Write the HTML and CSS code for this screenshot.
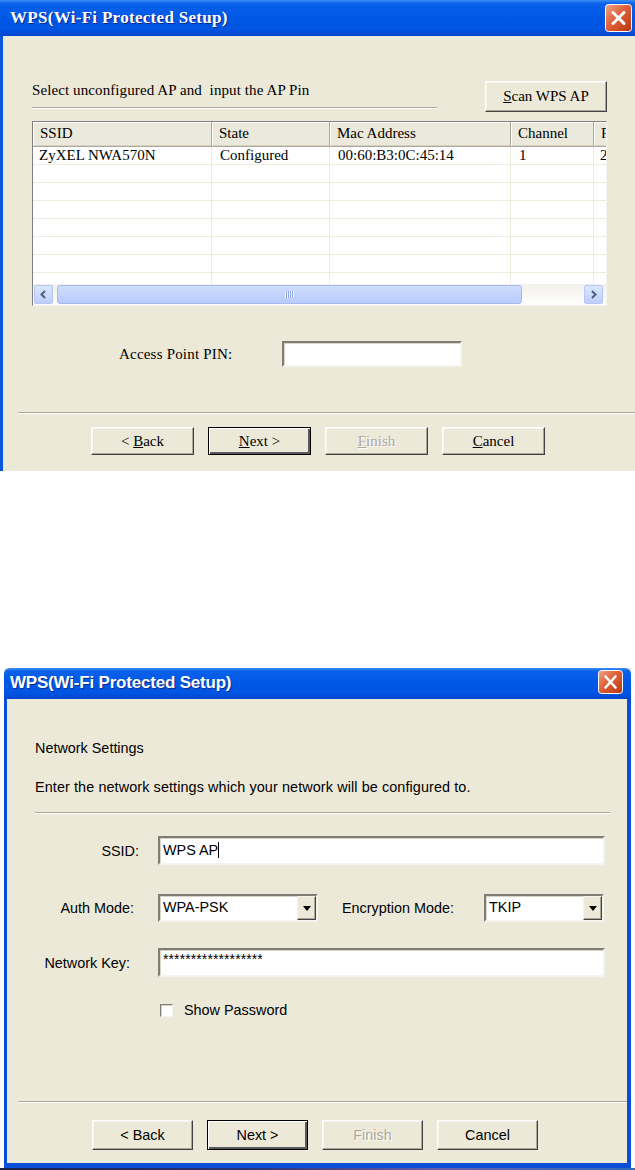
FILE: index.html
```html
<!DOCTYPE html>
<html lang="en">
<head>
  <meta charset="UTF-8" />
  <title>WPS(Wi-Fi Protected Setup)</title>
  <link rel="stylesheet" href="styles.css">
</head>
<body>

<!-- first wizard step: pick an AP -->
<div class="window classic">
  <div class="titlebar">
    <span class="title">WPS(Wi-Fi Protected Setup)</span>
    <span class="close">
      <svg width="27" height="28" viewBox="0 0 27 28">
        <defs>
          <linearGradient id="closeA" x1="0" y1="0" x2="1" y2="1">
            <stop offset="0" stop-color="#f0a58a"/>
            <stop offset="0.45" stop-color="#e0603a"/>
            <stop offset="1" stop-color="#b8360e"/>
          </linearGradient>
        </defs>
        <rect x="0.5" y="0.5" width="26" height="27" rx="3" fill="url(#closeA)" stroke="#fff"/>
        <path d="M8 8.5 L19 19.5 M19 8.5 L8 19.5" stroke="#fff" stroke-width="3" stroke-linecap="round"/>
      </svg>
    </span>
  </div>
  <div class="client">
    <div class="intro-row">
      <div class="intro">Select unconfigured AP and&nbsp; input the AP Pin</div>
      <div class="btn scan"><span><u>S</u>can WPS AP</span></div>
    </div>

    <div class="listview">
      <div class="lv-head">
        <div class="lv-col">SSID</div>
        <div class="lv-col">State</div>
        <div class="lv-col">Mac Address</div>
        <div class="lv-col">Channel</div>
        <div class="lv-col">F</div>
      </div>
      <div class="lv-body">
        <div class="lv-row">
          <div class="lv-cell">ZyXEL NWA570N</div>
          <div class="lv-cell">Configured</div>
          <div class="lv-cell">00:60:B3:0C:45:14</div>
          <div class="lv-cell">1</div>
          <div class="lv-cell">2</div>
        </div>
        <div class="lv-row"><div class="lv-cell"></div><div class="lv-cell"></div><div class="lv-cell"></div><div class="lv-cell"></div><div class="lv-cell"></div></div>
        <div class="lv-row"><div class="lv-cell"></div><div class="lv-cell"></div><div class="lv-cell"></div><div class="lv-cell"></div><div class="lv-cell"></div></div>
        <div class="lv-row"><div class="lv-cell"></div><div class="lv-cell"></div><div class="lv-cell"></div><div class="lv-cell"></div><div class="lv-cell"></div></div>
        <div class="lv-row"><div class="lv-cell"></div><div class="lv-cell"></div><div class="lv-cell"></div><div class="lv-cell"></div><div class="lv-cell"></div></div>
        <div class="lv-row"><div class="lv-cell"></div><div class="lv-cell"></div><div class="lv-cell"></div><div class="lv-cell"></div><div class="lv-cell"></div></div>
        <div class="lv-row"><div class="lv-cell"></div><div class="lv-cell"></div><div class="lv-cell"></div><div class="lv-cell"></div><div class="lv-cell"></div></div>
        <div class="lv-row"><div class="lv-cell"></div><div class="lv-cell"></div><div class="lv-cell"></div><div class="lv-cell"></div><div class="lv-cell"></div></div>
      </div>
      <div class="hscroll">
        <div class="sb-btn">
          <svg width="9" height="9" viewBox="0 0 9 9"><path d="M6 1 L2.5 4.5 L6 8" fill="none" stroke="#4d6185" stroke-width="2"/></svg>
        </div>
        <div class="sb-track">
          <div class="sb-thumb"><span class="grip"></span></div>
        </div>
        <div class="sb-btn">
          <svg width="9" height="9" viewBox="0 0 9 9"><path d="M3 1 L6.5 4.5 L3 8" fill="none" stroke="#4d6185" stroke-width="2"/></svg>
        </div>
      </div>
    </div>

    <div class="pin-row">
      <span class="pin-label">Access Point PIN:</span>
      <div class="field pin-field"></div>
    </div>

    <div class="sep wide"></div>

    <div class="wizard-buttons">
      <div class="btn"><span>&lt; <u>B</u>ack</span></div>
      <div class="btn default"><span><u>N</u>ext &gt;</span></div>
      <div class="btn disabled"><span><u>F</u>inish</span></div>
      <div class="btn"><span><u>C</u>ancel</span></div>
    </div>
  </div>
</div>

<!-- second step: network settings -->
<div class="window xp">
  <div class="titlebar">
    <span class="title">WPS(Wi-Fi Protected Setup)</span>
    <span class="close">
      <svg width="25" height="24" viewBox="0 0 25 24">
        <defs>
          <linearGradient id="closeB" x1="0" y1="0" x2="1" y2="1">
            <stop offset="0" stop-color="#f0a58a"/>
            <stop offset="0.45" stop-color="#e0603a"/>
            <stop offset="1" stop-color="#b8360e"/>
          </linearGradient>
        </defs>
        <rect x="0.5" y="0.5" width="24" height="23" rx="3" fill="url(#closeB)" stroke="#fff"/>
        <path d="M7.5 6.5 L17.5 17.5 M17.5 6.5 L7.5 17.5" stroke="#fff" stroke-width="2.6" stroke-linecap="round"/>
      </svg>
    </span>
  </div>
  <div class="client">
    <p class="heading">Network Settings</p>
    <p class="desc">Enter the network settings which your network will be configured to.</p>
    <div class="sep inner"></div>

    <div class="form-row ssid-row">
      <span class="lbl">SSID:</span>
      <div class="field text-field">WPS AP<span class="caret"></span></div>
    </div>

    <div class="form-row auth-row">
      <span class="lbl lbl-auth">Auth Mode:</span>
      <div class="field combo auth-combo">
        <span class="combo-text">WPA-PSK</span>
        <span class="combo-btn"><span class="arrow"></span></span>
      </div>
      <span class="enc-label">Encryption Mode:</span>
      <div class="field combo enc-combo">
        <span class="combo-text">TKIP</span>
        <span class="combo-btn"><span class="arrow"></span></span>
      </div>
    </div>

    <div class="form-row key-row">
      <span class="lbl lbl-key">Network Key:</span>
      <div class="field text-field key-field">******************</div>
    </div>

    <div class="check-row">
      <span class="checkbox"></span>
      <span>Show Password</span>
    </div>

    <div class="sep full"></div>

    <div class="wizard-buttons">
      <div class="btn"><span>&lt; Back</span></div>
      <div class="btn default"><span>Next &gt;</span></div>
      <div class="btn disabled"><span>Finish</span></div>
      <div class="btn"><span>Cancel</span></div>
    </div>
  </div>
</div>

<div class="taskbar"></div>

</body>
</html>
```

FILE: styles.css
```css
body {
  margin: 0;
  background: #fff;
  width: 635px;
  overflow: hidden;
}

.window {
  background: #ece9d8;
  color: #000;
}

.titlebar {
  display: flex;
  justify-content: space-between;
  align-items: flex-start;
  background: linear-gradient(to bottom, #3c8df6 0%, #0a62ea 10%, #0058e6 45%, #0055e2 80%, #0046cf 100%);
  color: #fff;
  box-sizing: border-box;
}

.title {
  font-weight: bold;
  white-space: nowrap;
  text-shadow: 1px 1px #0a2a8c;
}

.close svg {
  display: block;
}

/* classic look, serif bitmap style font */
.classic {
  width: 635px;
  font-family: "Liberation Serif", serif;
  font-size: 15px;
}

.classic .titlebar {
  height: 36px;
  padding: 4px 3px 0 10px;
}

.classic .title {
  font-size: 17px;
  line-height: 28px;
  letter-spacing: 0.3px;
}

.classic .client {
  border-left: 3px solid #0a57e0;
  padding: 45px 0 16px 0;
}

.intro-row {
  display: flex;
  align-items: flex-start;
  padding-left: 29px;
}

.intro {
  width: 405px;
  height: 26px;
  line-height: 18px;
  border-bottom: 1px solid #aca899;
  box-shadow: 0 1px 0 #fff;
  white-space: nowrap;
  letter-spacing: 0.1px;
}

.btn {
  box-sizing: border-box;
  width: 103px;
  height: 28px;
  display: flex;
  align-items: center;
  justify-content: center;
  background: #ece9d8;
  border: 1px solid;
  border-color: #fff #404040 #404040 #fff;
  box-shadow: inset -1px -1px 0 #aca899, inset 1px 1px 0 #f7f6f1;
  white-space: nowrap;
}

.btn.scan {
  width: 122px;
  height: 31px;
  margin-left: 48px;
}

.btn.default {
  border: 1px solid #000;
  box-shadow: inset 1px 1px 0 #fff, inset -2px -2px 0 #5a5a5a;
}

.btn.disabled {
  color: #aca899;
  text-shadow: 1px 1px 0 #fff;
}

/* list view */
.listview {
  margin: 9px 0 0 29px;
  width: 575px;
  height: 185px;
  box-sizing: border-box;
  border: 1px solid #7f7f7f;
  border-right-color: #f4f3ee;
  border-bottom-color: #f4f3ee;
  background: #fff;
  overflow: hidden;
}

.lv-head,
.lv-row {
  display: grid;
  grid-template-columns: 179px 118px 181px 83px 12px;
}

.lv-head {
  height: 25px;
}

.lv-col {
  box-sizing: border-box;
  padding-left: 7px;
  line-height: 23px;
  background: #ebe9db;
  border-right: 1px solid #aca899;
  border-bottom: 1px solid #aca899;
  box-shadow: inset 1px 1px 0 #fff, inset 0 -1px 0 #d6d2c2;
  white-space: nowrap;
  overflow: hidden;
}

.lv-col:last-child {
  border-right: 0;
}

.lv-body {
  height: 137px;
  overflow: hidden;
}

.lv-row {
  height: 18px;
}

.lv-cell {
  box-sizing: border-box;
  padding-left: 6px;
  line-height: 17px;
  border-right: 1px solid #efecdf;
  border-bottom: 1px solid #efecdf;
  white-space: nowrap;
  overflow: hidden;
}

.lv-row .lv-cell:nth-child(2),
.lv-row .lv-cell:nth-child(3),
.lv-row .lv-cell:nth-child(4) {
  padding-left: 8px;
}

.lv-row .lv-cell:last-child {
  border-right: 0;
}

.hscroll {
  display: flex;
  height: 21px;
  padding: 1px 3px 0 1px;
  background: linear-gradient(to bottom, #f3f1ec, #fefefe);
}

.sb-btn {
  width: 19px;
  height: 19px;
  box-sizing: border-box;
  display: flex;
  align-items: center;
  justify-content: center;
  border: 1px solid #b4c8f6;
  border-radius: 2px;
  background: linear-gradient(to bottom, #dce6fd, #bccefb);
}

.sb-track {
  flex: 1;
  padding-left: 4px;
}

.sb-thumb {
  width: 465px;
  height: 19px;
  box-sizing: border-box;
  border: 1px solid #a4baf0;
  border-radius: 3px;
  background: linear-gradient(to bottom, #cfdcfd, #b9cbfa);
  display: flex;
  align-items: center;
  justify-content: center;
}

.grip {
  width: 9px;
  height: 7px;
  background: repeating-linear-gradient(to right, #eef3fe 0 1px, #8ca6e4 1px 2px);
}

/* pin */
.pin-row {
  display: flex;
  align-items: center;
  margin-top: 35px;
  padding-left: 116px;
}

.pin-label {
  width: 163px;
  white-space: nowrap;
  letter-spacing: 0.2px;
}

.field {
  box-sizing: border-box;
  background: #fff;
  border: 2px solid;
  border-color: #7f7d74 #f4f3ee #f4f3ee #7f7d74;
  box-shadow: inset 1px 1px 0 #d8d5c8;
}

.pin-field {
  width: 180px;
  height: 26px;
}

.sep {
  height: 0;
  border-top: 1px solid #aca899;
  border-bottom: 1px solid #fff;
}

.sep.wide {
  margin: 45px 0 0 15px;
}

.wizard-buttons {
  display: flex;
  gap: 14px;
}

.classic .wizard-buttons {
  margin-top: 13px;
  padding-left: 88px;
}

/* xp look, sans font */
.xp {
  width: 627px;
  margin: 197px 0 0 4px;
  font-family: "Liberation Sans", Arial, sans-serif;
  font-size: 14.4px;
}

.xp .titlebar {
  height: 31px;
  padding: 2px 8px 0 6px;
  border-radius: 6px 6px 0 0;
}

.xp .title {
  font-size: 17px;
  line-height: 26px;
  letter-spacing: -0.2px;
}

.xp .client {
  border: solid #0b4fd9;
  border-width: 0 4px 5px 3px;
  padding: 41px 0 13px 0;
}

.heading,
.desc {
  margin: 0 0 0 28px;
  line-height: 16px;
  white-space: nowrap;
}

.desc {
  margin-top: 23px;
  letter-spacing: 0.1px;
}

.sep.inner {
  margin: 17px 0 0 28px;
  width: 575px;
}

.form-row {
  display: flex;
  align-items: center;
  padding-left: 28px;
}

.lbl {
  width: 104px;
  margin-right: 19px;
  text-align: right;
  white-space: nowrap;
}

.lbl-auth {
  width: 99px;
  margin-right: 24px;
}

.lbl-key {
  width: 95px;
  margin-right: 28px;
}

.ssid-row {
  margin-top: 22px;
}

.auth-row {
  margin-top: 29px;
}

.key-row {
  margin-top: 26px;
}

.text-field {
  width: 447px;
  height: 29px;
  padding: 3px 0 0 3px;
  line-height: 18px;
}

.caret {
  display: inline-block;
  width: 1px;
  height: 16px;
  background: #000;
  vertical-align: -3px;
}

.key-field {
  font-size: 14px;
  line-height: 12px;
  padding-top: 3px;
  letter-spacing: 0.1px;
}

.combo {
  height: 28px;
  display: flex;
  align-items: stretch;
  justify-content: space-between;
}

.auth-combo {
  width: 160px;
}

.enc-combo {
  width: 120px;
}

.combo-text {
  padding: 3px 0 0 3px;
  line-height: 16px;
}

.combo-btn {
  width: 19px;
  box-sizing: border-box;
  display: flex;
  align-items: center;
  justify-content: center;
  background: #ece9d8;
  border: 1px solid;
  border-color: #f4f3ee #404040 #404040 #f4f3ee;
  box-shadow: inset -1px -1px 0 #aca899;
}

.arrow {
  width: 0;
  height: 0;
  border-left: 4px solid transparent;
  border-right: 4px solid transparent;
  border-top: 5px solid #000;
}

.enc-label {
  margin-left: 24px;
  width: 142px;
  white-space: nowrap;
}

.check-row {
  display: flex;
  align-items: center;
  gap: 11px;
  height: 16px;
  margin-top: 25px;
  padding-left: 153px;
}

.checkbox {
  width: 13px;
  height: 13px;
  box-sizing: border-box;
  background: #fff;
  border: 1px solid;
  border-color: #7f7d74 #f4f3ee #f4f3ee #7f7d74;
  box-shadow: inset 1px 1px 0 #d8d5c8;
}

.sep.full {
  margin: 83px 0 0 11px;
}

.xp .wizard-buttons {
  margin-top: 17px;
  padding-left: 85px;
}

.xp .btn {
  width: 101px;
  height: 30px;
}

.taskbar {
  height: 4px;
  background: linear-gradient(to right, #1c2147, #2e3470 40%, #6a5ea8 70%, #2f6bb8);
}
```
